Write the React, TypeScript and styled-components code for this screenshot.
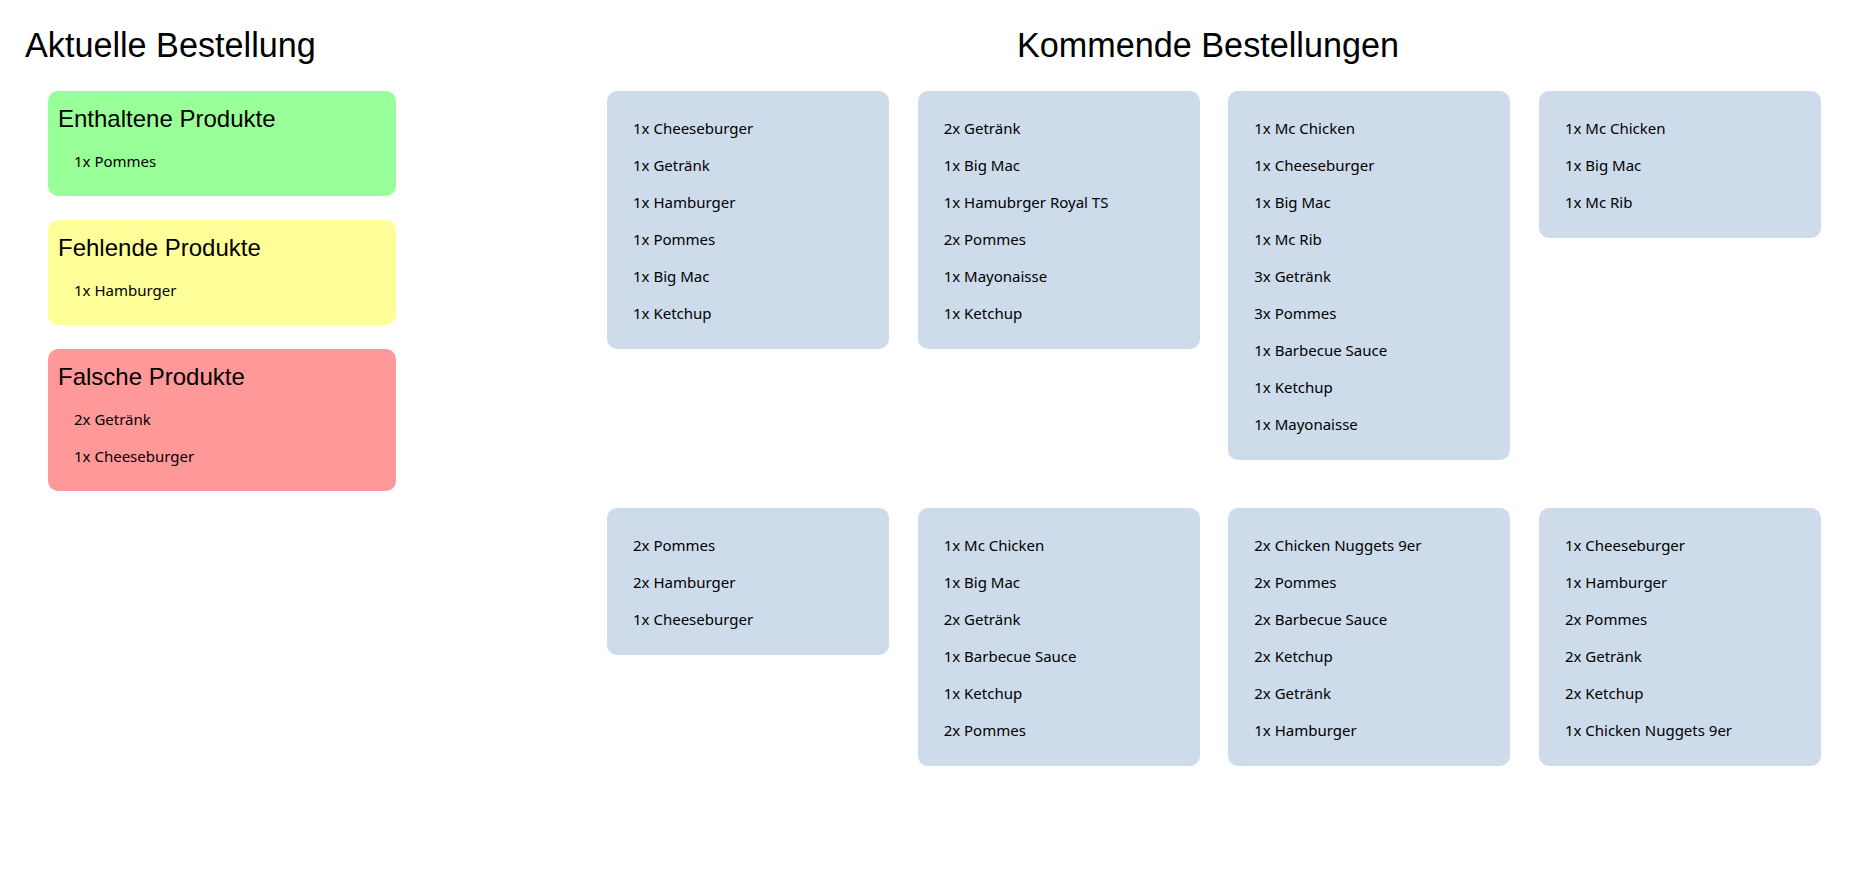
import { FC } from "react";
import styled, { createGlobalStyle } from "styled-components";

type Tone = "green" | "yellow" | "red";

interface ProductGroup {
  title: string;
  tone: Tone;
  items: string[];
}

const currentOrder: ProductGroup[] = [
  { title: "Enthaltene Produkte", tone: "green", items: ["1x Pommes"] },
  { title: "Fehlende Produkte", tone: "yellow", items: ["1x Hamburger"] },
  {
    title: "Falsche Produkte",
    tone: "red",
    items: ["2x Getränk", "1x Cheeseburger"],
  },
];

const upcomingOrders: string[][] = [
  [
    "1x Cheeseburger",
    "1x Getränk",
    "1x Hamburger",
    "1x Pommes",
    "1x Big Mac",
    "1x Ketchup",
  ],
  [
    "2x Getränk",
    "1x Big Mac",
    "1x Hamubrger Royal TS",
    "2x Pommes",
    "1x Mayonaisse",
    "1x Ketchup",
  ],
  [
    "1x Mc Chicken",
    "1x Cheeseburger",
    "1x Big Mac",
    "1x Mc Rib",
    "3x Getränk",
    "3x Pommes",
    "1x Barbecue Sauce",
    "1x Ketchup",
    "1x Mayonaisse",
  ],
  ["1x Mc Chicken", "1x Big Mac", "1x Mc Rib"],
  ["2x Pommes", "2x Hamburger", "1x Cheeseburger"],
  [
    "1x Mc Chicken",
    "1x Big Mac",
    "2x Getränk",
    "1x Barbecue Sauce",
    "1x Ketchup",
    "2x Pommes",
  ],
  [
    "2x Chicken Nuggets 9er",
    "2x Pommes",
    "2x Barbecue Sauce",
    "2x Ketchup",
    "2x Getränk",
    "1x Hamburger",
  ],
  [
    "1x Cheeseburger",
    "1x Hamburger",
    "2x Pommes",
    "2x Getränk",
    "2x Ketchup",
    "1x Chicken Nuggets 9er",
  ],
];

const toneColors: Record<Tone, string> = {
  green: "#99ff99",
  yellow: "#ffff99",
  red: "#ff9999",
};

const App: FC = () => {
  return (
    <>
      <GlobalStyle />
      <StyledPage>
        <StyledCurrentColumn>
          <StyledHeading>Aktuelle Bestellung</StyledHeading>
          <StyledGroupList>
            {currentOrder.map((group) => (
              <StyledGroupBox key={group.title} $tone={group.tone}>
                <StyledGroupTitle>{group.title}</StyledGroupTitle>
                <StyledGroupItems>
                  {group.items.map((item) => (
                    <StyledItem key={item}>{item}</StyledItem>
                  ))}
                </StyledGroupItems>
              </StyledGroupBox>
            ))}
          </StyledGroupList>
        </StyledCurrentColumn>

        <StyledUpcomingColumn>
          <StyledHeading $centered>Kommende Bestellungen</StyledHeading>
          <StyledOrderGrid>
            {upcomingOrders.map((order, index) => (
              <StyledOrderCard key={index}>
                {order.map((item) => (
                  <StyledItem key={item}>{item}</StyledItem>
                ))}
              </StyledOrderCard>
            ))}
          </StyledOrderGrid>
        </StyledUpcomingColumn>
      </StyledPage>
    </>
  );
};

export default App;

const GlobalStyle = createGlobalStyle`
  body {
    margin: 0;
    background: #ffffff;
    color: #000000;
    font-family: "Liberation Sans", Arial, sans-serif;
  }
`;

const StyledPage = styled.div`
  display: flex;
  padding: 26px 52px 40px 25px;
  min-height: 883px;
  box-sizing: border-box;
`;

const StyledCurrentColumn = styled.section`
  width: 570px;
  flex-shrink: 0;
  display: flex;
  flex-direction: column;
`;

const StyledUpcomingColumn = styled.section`
  flex: 1;
  display: flex;
  flex-direction: column;
`;

const StyledHeading = styled.h1<{ $centered?: boolean }>`
  margin: 0 0 26px;
  font-family: "Liberation Sans", Arial, sans-serif;
  font-size: 34.2px;
  font-weight: 400;
  line-height: 39px;
  text-align: ${({ $centered }) => ($centered ? "center" : "left")};
`;

const StyledGroupList = styled.div`
  display: flex;
  flex-direction: column;
  gap: 24px;
  margin-left: 23px;
  width: 348px;
`;

const StyledGroupBox = styled.div<{ $tone: Tone }>`
  background: ${({ $tone }) => toneColors[$tone]};
  border-radius: 10px;
  padding: 14px 10px 24px;
`;

const StyledGroupTitle = styled.h2`
  margin: 0;
  font-family: "Liberation Sans", Arial, sans-serif;
  font-size: 24px;
  font-weight: 400;
  line-height: 28px;
`;

const StyledGroupItems = styled.div`
  display: flex;
  flex-direction: column;
  gap: 16px;
  margin-top: 18px;
  padding-left: 16px;
`;

const StyledOrderGrid = styled.div`
  display: grid;
  grid-template-columns: repeat(4, 1fr);
  column-gap: 28.5px;
  row-gap: 48px;
  align-items: start;
  padding-left: 12px;
`;

const StyledOrderCard = styled.div`
  display: flex;
  flex-direction: column;
  gap: 16px;
  background: #cddbeb;
  border-radius: 10px;
  padding: 27px 26px 25px;
`;

const StyledItem = styled.span`
  font-family: "Noto Sans", "Open Sans", sans-serif;
  font-size: 15px;
  line-height: 21px;
`;
